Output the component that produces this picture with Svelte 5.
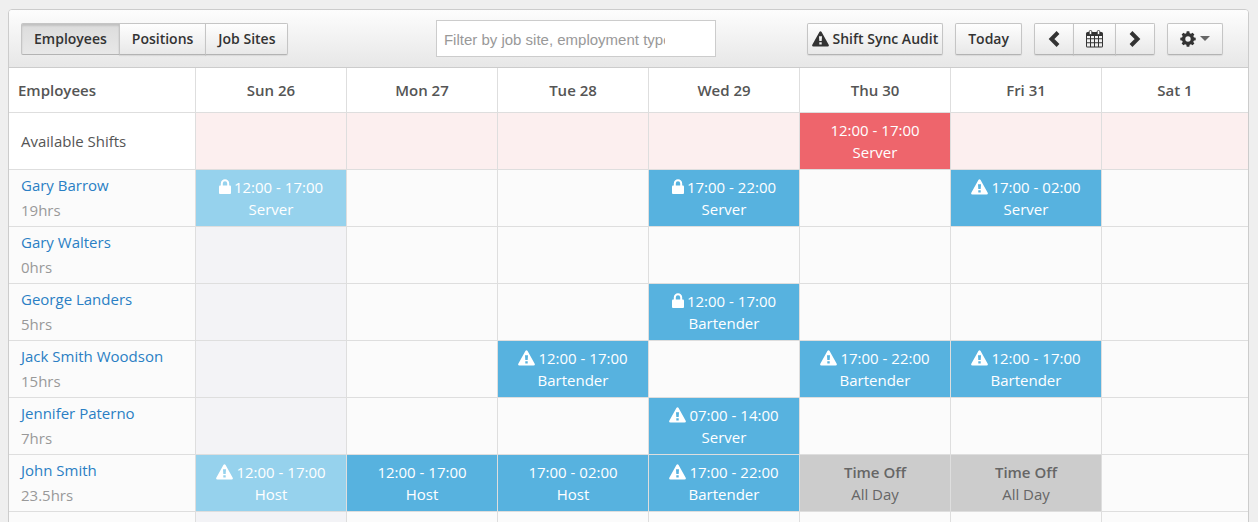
<script>
    const days = ['Sun 26', 'Mon 27', 'Tue 28', 'Wed 29', 'Thu 30', 'Fri 31', 'Sat 1'];
    const views = ['Employees', 'Positions', 'Job Sites'];

    let view = 'Employees';
    let filter = '';

    // shifts are keyed by the index of the day
    const open = { 4: { time: '12:00 - 17:00', role: 'Server', kind: 'open' } };

    const employees = [
        { name: 'Gary Barrow', hours: '19hrs', shifts: {
            0: { time: '12:00 - 17:00', role: 'Server', icon: 'lock', kind: 'past' },
            3: { time: '17:00 - 22:00', role: 'Server', icon: 'lock' },
            5: { time: '17:00 - 02:00', role: 'Server', icon: 'warning' }
        } },
        { name: 'Gary Walters', hours: '0hrs', shifts: {} },
        { name: 'George Landers', hours: '5hrs', shifts: {
            3: { time: '12:00 - 17:00', role: 'Bartender', icon: 'lock' }
        } },
        { name: 'Jack Smith Woodson', hours: '15hrs', shifts: {
            2: { time: '12:00 - 17:00', role: 'Bartender', icon: 'warning' },
            4: { time: '17:00 - 22:00', role: 'Bartender', icon: 'warning' },
            5: { time: '12:00 - 17:00', role: 'Bartender', icon: 'warning' }
        } },
        { name: 'Jennifer Paterno', hours: '7hrs', shifts: {
            3: { time: '07:00 - 14:00', role: 'Server', icon: 'warning' }
        } },
        { name: 'John Smith', hours: '23.5hrs', shifts: {
            0: { time: '12:00 - 17:00', role: 'Host', icon: 'warning', kind: 'past' },
            1: { time: '12:00 - 17:00', role: 'Host' },
            2: { time: '17:00 - 02:00', role: 'Host' },
            3: { time: '17:00 - 22:00', role: 'Bartender', icon: 'warning' },
            4: { time: 'Time Off', role: 'All Day', kind: 'off' },
            5: { time: 'Time Off', role: 'All Day', kind: 'off' }
        } },
        { name: 'Marissa Barker', hours: '0hrs', shifts: {} }
    ];
</script>

{#snippet warning()}
    <svg class="icon" width="17" height="16" viewBox="0 0 17 16" aria-hidden="true">
        <path fill="currentColor" fill-rule="evenodd" d="M7.4 1.1Q8.5-.6 9.6 1.1L16.7 13.7Q17.4 15.5 15.6 15.6H1.4Q-.4 15.5.3 13.7ZM7 5.3L7.3 10H9.7L10 5.3ZM7.3 11.2V13.5H9.7V11.2Z" />
    </svg>
{/snippet}

{#snippet lock()}
    <svg class="icon" width="12" height="16" viewBox="0 0 12 16" aria-hidden="true">
        <path fill="none" stroke="currentColor" stroke-width="2" d="M2.8 8V4.5a3.2 3.2 0 0 1 6.4 0V8" />
        <rect fill="currentColor" x="0" y="6.5" width="12" height="8.5" rx="1" />
    </svg>
{/snippet}

{#snippet cell(shift)}
    {#if shift}
        <div class="shift {shift.kind || 'booked'}">
            <div class="time">
                {#if shift.icon === 'lock'}{@render lock()}{/if}
                {#if shift.icon === 'warning'}{@render warning()}{/if}
                <span>{shift.time}</span>
            </div>
            <div>{shift.role}</div>
        </div>
    {/if}
{/snippet}

<div class="schedule">
    <div class="toolbar">
        <div class="group">
            {#each views as name}
                <button class="btn" class:active={view === name} on:click={() => view = name}>{name}</button>
            {/each}
        </div>

        <input class="filter" type="text" aria-label="Filter shifts" placeholder="Filter by job site, employment type" bind:value={filter}>

        <div class="actions">
            <button class="btn audit">{@render warning()}Shift Sync Audit</button>
            <button class="btn">Today</button>
            <div class="group">
                <button class="btn arrow" aria-label="Previous week">
                    <svg width="12" height="16" viewBox="0 0 12 16"><path fill="none" stroke="currentColor" stroke-width="4" d="M10 1.5L3.5 8L10 14.5" /></svg>
                </button>
                <button class="btn calendar" aria-label="Pick a date">
                    <svg width="17" height="18" viewBox="0 0 17 18">
                        <path fill="currentColor" fill-rule="evenodd" d="M1.5 2H15.5Q17 2 17 3.5V16Q17 17.5 15.5 17.5H1.5Q0 17.5 0 16V3.5Q0 2 1.5 2ZM1 6V8.3H4V6ZM5 6V8.3H8V6ZM9 6V8.3H12V6ZM13 6V8.3H16V6ZM1 9.3V12.3H4V9.3ZM5 9.3V12.3H8V9.3ZM9 9.3V12.3H12V9.3ZM13 9.3V12.3H16V9.3ZM1 13.3V16.5H4V13.3ZM5 13.3V16.5H8V13.3ZM9 13.3V16.5H12V13.3ZM13 13.3V16.5H16V13.3Z" />
                        <rect x="3.2" y=".5" width="2.6" height="4" rx="1.2" fill="#fff" stroke="currentColor" stroke-width=".9" />
                        <rect x="11.2" y=".5" width="2.6" height="4" rx="1.2" fill="#fff" stroke="currentColor" stroke-width=".9" />
                    </svg>
                </button>
                <button class="btn arrow" aria-label="Next week">
                    <svg width="12" height="16" viewBox="0 0 12 16"><path fill="none" stroke="currentColor" stroke-width="4" d="M2 1.5L8.5 8L2 14.5" /></svg>
                </button>
            </div>
            <button class="btn settings" aria-label="Settings">
                <svg width="16" height="16" viewBox="0 0 16 16">
                    <circle cx="8" cy="8" r="4.4" fill="none" stroke="currentColor" stroke-width="3.4" />
                    {#each [0, 45, 90, 135] as angle}
                        <path fill="currentColor" d="M6.7.3H9.3L9.8 3H6.2ZM6.7 15.7H9.3L9.8 13H6.2Z" transform="rotate({angle} 8 8)" />
                    {/each}
                </svg>
                <span class="caret"></span>
            </button>
        </div>
    </div>

    <table>
        <colgroup>
            <col class="names">
            <col span="6">
            <col class="last">
        </colgroup>
        <thead>
            <tr>
                <th scope="col">Employees</th>
                {#each days as day}
                    <th scope="col">{day}</th>
                {/each}
            </tr>
        </thead>
        <tbody>
            <tr class="available">
                <th scope="row">Available Shifts</th>
                {#each days as day, i}
                    <td>{@render cell(open[i])}</td>
                {/each}
            </tr>
            {#each employees as employee}
                <tr>
                    <th scope="row">
                        <a href="#employee">{employee.name}</a>
                        <div class="hours">{employee.hours}</div>
                    </th>
                    {#each days as day, i}
                        <td class:past={i === 0}>{@render cell(employee.shifts[i])}</td>
                    {/each}
                </tr>
            {/each}
        </tbody>
    </table>
</div>

<style>
    :global(body) {
        background: #efefef;
        font-family: "Open Sans", sans-serif;
        font-size: 15px;
        color: #555;
    }

    .schedule {
        margin: 9px 9px 9px 8px;
        border: 1px solid #ccc;
        border-radius: 4px 4px 0 0;
        background: #fbfbfb;
        overflow: hidden;
    }

    .toolbar {
        display: grid;
        grid-template-columns: 9fr 280px 11fr;
        align-items: center;
        height: 57px;
        padding: 0 25px 0 12px;
        border-bottom: 1px solid #ccc;
        background: linear-gradient(#fdfdfd, #e7e7e7);
    }

    .group {
        display: flex;
    }

    .actions {
        display: flex;
        justify-content: flex-end;
        gap: 12px;
    }

    .btn {
        display: flex;
        align-items: center;
        justify-content: center;
        box-sizing: border-box;
        height: 32px;
        padding: 0 12px 1px;
        border: 1px solid #c5c5c5;
        border-bottom-color: #b3b3b3;
        border-radius: 2px;
        background: linear-gradient(#fefefe, #e8e8e8);
        box-shadow: 0 1px 1px rgba(0, 0, 0, 0.08);
        font-family: inherit;
        font-size: 14px;
        font-weight: 600;
        color: #333;
        white-space: nowrap;
        cursor: pointer;
    }

    .btn svg {
        flex: none;
        margin-top: 2px;
    }

    .group .btn {
        border-radius: 0;
    }

    .group .btn + .btn {
        margin-left: -1px;
    }

    .group .btn:first-child {
        border-radius: 2px 0 0 2px;
    }

    .group .btn:last-child {
        border-radius: 0 2px 2px 0;
    }

    .btn.active {
        background: linear-gradient(#dcdcdc, #e8e8e8);
        box-shadow: inset 0 2px 2px rgba(0, 0, 0, 0.12);
    }

    .btn.audit {
        gap: 3px;
        padding: 0 4px 1px;
    }

    .btn.arrow {
        width: 40px;
    }

    .btn.calendar {
        width: 43px;
    }

    .btn.settings {
        gap: 4px;
        width: 56px;
    }

    .caret {
        border: 5px solid transparent;
        border-top-color: #666;
        border-bottom: 0;
    }

    .filter {
        box-sizing: border-box;
        width: 100%;
        height: 37px;
        padding: 2px 50px 0 7px;
        border: 1px solid #ccc;
        border-radius: 0;
        background: #fff;
        font-family: "Liberation Sans", Arial, sans-serif;
        font-size: 15px;
        color: #555;
    }

    .filter::placeholder {
        color: #999;
    }

    table {
        width: 100%;
        table-layout: fixed;
        border-collapse: separate;
        border-spacing: 0;
    }

    .names {
        width: 187px;
    }

    .last {
        width: 146px;
    }

    th, td {
        box-sizing: border-box;
        height: 57px;
        padding: 0;
        border-right: 1px solid #dedede;
        border-bottom: 1px solid #dedede;
        line-height: 22px;
    }

    th:last-child, td:last-child {
        border-right: 0;
    }

    thead th {
        height: 45px;
        padding-bottom: 1px;
        background: #fff;
        font-weight: 600;
    }

    thead th:first-child {
        padding-left: 9px;
        text-align: left;
    }

    tbody th {
        padding-left: 12px;
        font-weight: 400;
        line-height: 25px;
        text-align: left;
    }

    .available th {
        background: #fff;
    }

    .available td {
        background: #fcefef;
    }

    .past {
        background: #f3f3f6;
    }

    a {
        color: #2a7fc4;
        text-decoration: none;
    }

    .hours {
        color: #999;
    }

    .shift {
        display: flex;
        flex-direction: column;
        justify-content: center;
        height: 56px;
        text-align: center;
        color: #fff;
    }

    .time {
        display: flex;
        align-items: center;
        justify-content: center;
        gap: 3px;
    }

    .shift.booked {
        background: #57b2df;
    }

    .shift.past {
        background: #96d2ed;
    }

    .shift.open {
        background: #ee656c;
    }

    .shift.off {
        background: #ccc;
        color: #666;
    }

    .off .time {
        font-weight: 600;
    }
</style>
